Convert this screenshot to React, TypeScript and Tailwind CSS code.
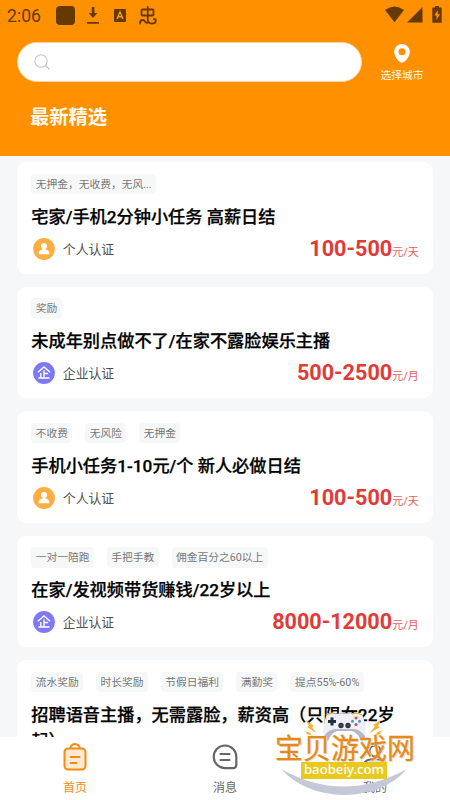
import React from 'react';

type Job = {
  tags: string[];
  title: string;
  company?: boolean;
  price?: string;
  unit?: string;
};

const jobs: Job[] = [
  { tags: ['无押金，无收费，无风...'], title: '宅家/手机2分钟小任务 高薪日结', price: '100-500', unit: '元/天' },
  { tags: ['奖励'], title: '未成年别点做不了/在家不露脸娱乐主播', company: true, price: '500-2500', unit: '元/月' },
  { tags: ['不收费', '无风险', '无押金'], title: '手机小任务1-10元/个 新人必做日结', price: '100-500', unit: '元/天' },
  { tags: ['一对一陪跑', '手把手教', '佣金百分之60以上'], title: '在家/发视频带货赚钱/22岁以上', company: true, price: '8000-12000', unit: '元/月' },
  { tags: ['流水奖励', '时长奖励', '节假日福利', '满勤奖', '提点55%-60%'], title: '招聘语音主播，无需露脸，薪资高（只限女22岁起）' },
];

function StatusBar() {
  return (
    <div className="flex h-[31px] items-start justify-between pl-[7px] pr-[8px] text-[#653900]">
      <div className="flex">
        <span className="mt-[6px] w-[49px] text-[17.600px] leading-[21px]">2:06</span>
        <span className="mt-[6px] h-[19px] w-[19px] rounded-[4px] bg-[#653900]" />
        <svg className="ml-[11px] mt-[7px]" width="14" height="18" viewBox="0 0 14 18" fill="currentColor">
          <path d="M5.800 0h2.600v6h3L7 11 2.700 6h3.100zM1 15h12v1.800H1z" />
        </svg>
        <svg className="ml-[14px] mt-[9px]" width="12" height="13" viewBox="0 0 12 13">
          <rect width="12" height="13" rx="1" fill="currentColor" />
          <path d="M3 10 6 3l3 7M4.200 7.800h3.600" fill="none" stroke="#f99a25" strokeWidth="1.400" />
        </svg>
        <svg className="ml-[13px] mt-[6px]" width="18" height="19" viewBox="0 0 18 19" fill="none" stroke="currentColor" strokeWidth="1.800" strokeLinecap="round" strokeLinejoin="round">
          <path d="M3.500 3.500h10q1 0 1 1v4q0 1-1 1h-10q-1 0-1-1v-4q0-1 1-1zM8.800 1v12.500q0 4 4 4 4 0 4-2.500 0-1.800-1.800-2M1 17.500q0-3.500 2.500-3.500 2 0 2.300 1.500L8 17" />
        </svg>
      </div>
      <div className="flex">
        <svg className="mt-[6px]" width="19" height="17" viewBox="0 0 19 17" fill="currentColor"><path d="M0 4Q9.500-3.200 19 4L9.500 16.200z" /></svg>
        <svg className="ml-[3px] mt-[7px]" width="16" height="16" viewBox="0 0 16 16" fill="currentColor"><path d="M15.500 0v15.500H0z" /></svg>
        <svg className="ml-[9px] mt-[6px]" width="10" height="17" viewBox="0 0 10 17">
          <path d="M3 0h4v1.500h2q.700 0 .700.700v14q0 .600-.700.600H1q-.700 0-.700-.600v-14q0-.700.700-.700h2z" fill="currentColor" />
          <path d="M5.800 4 2.300 9.500h2.200V14L8 8.300H5.800z" fill="#ff9000" />
        </svg>
      </div>
    </div>
  );
}

function Badge({ company }: { company?: boolean }) {
  return (
    <svg width="22" height="22" viewBox="0 0 22 22" className="shrink-0">
      <circle cx="11" cy="11" r="10.900" fill={company ? '#7d79f6' : '#fbae42'} />
      {company ? (
        <path d="M4.900 10.200 11 5l6.100 5.200M11 8.300v7.500M11 11.500h4M7.800 11v4.800M5.400 16h11.200" fill="none" stroke="#fff" strokeWidth="1.350" />
      ) : (
        <g fill="#fff">
          <circle cx="11" cy="8" r="3" />
          <path d="M9.500 10h3v1.500c2.400.500 3.900 1.500 3.900 3.400v1.300H5.600v-1.300c0-1.900 1.500-2.900 3.900-3.400z" />
        </g>
      )}
    </svg>
  );
}

function JobCard({ job }: { job: Job }) {
  return (
    <article className="h-[111.800px] shrink-0 rounded-[9px] bg-white px-[14.300px] pt-[11.500px]">
      <div className="flex gap-[13px]">
        {job.tags.map((tag) => (
          <span key={tag} className="h-[20.500px] whitespace-nowrap rounded-[4px] bg-[#f6f7f7] px-[4.400px] text-[10.750px] leading-[22px] text-[#777]">{tag}</span>
        ))}
      </div>
      <h2 className="mt-[9.700px] text-[17.200px] font-medium leading-[26px] text-black [-webkit-text-stroke:0.250px_#000]">{job.title}</h2>
      {job.price && (
        <div className="mt-[7.500px] flex h-[23px] items-center pl-[1.500px]">
          <Badge company={job.company} />
          <span className="ml-[8px] mt-[1px] text-[12.850px] text-[#505050]">{job.company ? '企业认证' : '个人认证'}</span>
          <div className="ml-auto flex items-baseline pt-[4px] text-[#e23a37]">
            <span className="text-[21.600px] font-bold leading-[22px]">{job.price}</span>
            <span className="text-[11px] leading-[22px] text-[#e5605b]">{job.unit}</span>
          </div>
        </div>
      )}
    </article>
  );
}

function Watermark() {
  return (
    <div className="absolute left-[275px] top-[714px] h-[83px] w-[142px]">
      <svg className="absolute inset-0 overflow-visible" width="142" height="83" viewBox="0 0 142 83">
        <path d="M6 55Q68 90 132 55 110 80 69 81 29 80 6 55z" fill="#c6c8d8" />
        <g transform="translate(0 -2)">
          <path d="M51 4Q69-2 88 4 91 14 90 27 89 30 86 29 83 21 77 19H62Q56 21 53 29 49 31 49 26 48 14 51 4z" fill="#b5b7c6" />
          <path d="M52 3Q57-1 62 2H76Q82-1 87 3 91 11 90 24 84 16 77 17H62Q55 16 49 24 48 11 52 3z" fill="#eff0f5" />
          <path d="M51 3q5-3 10-1M77 2q5-2 10 1" fill="none" stroke="#e3ad34" strokeWidth="1.300" />
          <path d="M57 5.500v8M53 9.500h8" stroke="#222f43" strokeWidth="3" />
          <circle cx="66" cy="13.500" r="2.700" fill="#27354a" /><circle cx="73" cy="13.500" r="2.700" fill="#27354a" />
          <circle cx="66" cy="13.500" r="1" fill="#9c3340" /><circle cx="73" cy="13.500" r="1" fill="#9c3340" />
          <circle cx="81" cy="6" r="1.500" fill="#d94a50" /><circle cx="81" cy="12.500" r="1.500" fill="#d94a50" />
          <circle cx="77.500" cy="9.300" r="1.500" fill="#4b9bb6" /><circle cx="84.500" cy="9.300" r="1.500" fill="#4b9bb6" />
        </g>
        <path d="m31 6 8 6-2 1 4 6-9-6 2-1zM106 6l-8 5 2 1-5 7 10-6-2-1zM29 17l7 2-1 1 4 2-8-2 1-1zM107 16l-6 3 1 1-5 2 9-2-1-1z" fill="#f7b22f" />
      </svg>
      <div className="absolute left-0 top-[15px] whitespace-nowrap text-[28px] font-normal leading-[42px] text-[#e58a18] [-webkit-text-stroke:0.300px_#e58a18] [text-shadow:0_0_1px_white,1px_1px_0_#dedede]">宝贝游戏网</div>
      <div className="absolute left-[26px] top-[48px] flex h-[17px] w-[86px] items-center justify-center bg-[#e7c91f] pb-[1px] font-['Noto_Sans',sans-serif] text-[13.200px] font-medium leading-none text-white">baobeiy.com</div>
    </div>
  );
}

export default function App() {
  return (
    <main className="relative flex h-[800px] w-[450px] flex-col overflow-hidden bg-[#f6f7f9] font-[Roboto,'Noto_Sans_CJK_SC',sans-serif]">
      <header className="h-[155.500px] shrink-0 bg-[#ff9000]">
        <StatusBar />
        <div className="mt-[11px] flex pl-[17px]">
          <div className="flex h-[40px] w-[345px] items-center rounded-full border border-[#ffd49c] bg-white pl-[16px]">
            <svg width="17" height="17" viewBox="0 0 17 17" fill="none" stroke="#c4c4c4" strokeWidth="1.100"><circle cx="7" cy="7" r="6.200" /><path d="m11.500 11.500 4 4" /></svg>
          </div>
          <div className="flex w-[80px] flex-col items-center text-[#fff9ed]">
            <svg className="mt-[1.500px]" width="16" height="19" viewBox="0 0 16 19"><path d="M8 0a7.800 7.800 0 0 1 7.800 7.700C15.800 13 10.500 18.700 8 18.700S.200 13 .200 7.700A7.800 7.800 0 0 1 8 0zm0 4.200a3.500 3.500 0 1 0 0 7 3.500 3.500 0 0 0 0-7z" fill="#fff" /></svg>
            <span className="mt-[5px] text-[10.750px] leading-[16px]">选择城市</span>
          </div>
        </div>
        <h1 className="ml-[30px] mt-[20px] text-[19.300px] font-bold leading-[28px] text-[#fffaf0]">最新精选</h1>
      </header>

      <section className="flex min-h-0 flex-1 flex-col gap-[12.700px] overflow-hidden px-[17px] pt-[6.700px]">
        {jobs.map((job) => <JobCard key={job.title} job={job} />)}
      </section>

      <nav className="grid h-[63px] shrink-0 grid-cols-3 bg-white text-[12px] leading-[18px] text-[#666]">
        <div className="flex flex-col items-center pt-[5px] text-[#f38b13]">
          <svg width="26" height="30" viewBox="0 0 26 30" fill="none" stroke="currentColor" strokeWidth="2" strokeLinecap="round" strokeLinejoin="round">
            <path d="M8 6.500 9 4q4-4 8 0l1 2.500" />
            <rect x="2.500" y="6.500" width="21" height="21" rx="3.500" fill="#ffe9d1" />
            <path d="M8.500 15h9M8.500 21h6" />
          </svg>
          <span className="mt-[7px]">首页</span>
        </div>
        <div className="flex flex-col items-center pt-[5px]">
          <svg width="26" height="30" viewBox="0 0 26 30" fill="none" stroke="currentColor" strokeWidth="2.200" strokeLinecap="round">
            <path d="M13 3.500a11.300 11.300 0 1 0 0 22.600h8q3.300 0 3.300-3.300v-8A11.300 11.300 0 0 0 13 3.500z" />
            <path d="M8.500 12h9M8.500 18h9" />
          </svg>
          <span className="mt-[7px]">消息</span>
        </div>
        <div className="flex flex-col items-center pt-[5px]">
          <svg width="26" height="30" viewBox="0 0 26 30" fill="none" stroke="currentColor" strokeWidth="2">
            <circle cx="13" cy="9" r="5.500" /><path d="M2 26v-3q0-6 11-6t11 6v3z" fill="#e4e4e4" />
          </svg>
          <span className="mt-[7px]">我的</span>
        </div>
      </nav>
      <Watermark />
    </main>
  );
}
